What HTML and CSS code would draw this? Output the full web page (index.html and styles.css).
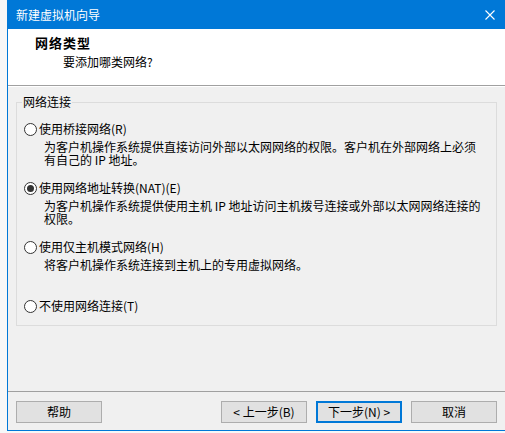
FILE: index.html
```html
<!DOCTYPE html>
<html lang="zh-CN">
<head>
<meta charset="utf-8">
<title>新建虚拟机向导</title>
<link rel="stylesheet" href="styles.css">
</head>
<body>
<div class="window">
  <div class="titlebar">
    <span class="title-text">新建虚拟机向导</span>
    <svg class="close" width="10" height="10" viewBox="0 0 10 10" aria-hidden="true">
      <path d="M0.5 0.5 L9.5 9.5 M9.5 0.5 L0.5 9.5" stroke="#fff" stroke-width="1.1" fill="none"/>
    </svg>
  </div>
  <div class="header">
    <div class="h-title">网络类型</div>
    <div class="h-sub">要添加哪类网络?</div>
  </div>
  <div class="body">
    <div class="group">
      <span class="legend">网络连接</span>
      <div class="option">
        <div class="radio-row"><span class="radio"></span><span>使用桥接网络(R)</span></div>
        <div class="desc">为客户机操作系统提供直接访问外部以太网网络的权限。客户机在外部网络上必须<br>有自己的 IP 地址。</div>
      </div>
      <div class="option">
        <div class="radio-row"><span class="radio checked"></span><span>使用网络地址转换(NAT)(E)</span></div>
        <div class="desc">为客户机操作系统提供使用主机 IP 地址访问主机拨号连接或外部以太网网络连接的<br>权限。</div>
      </div>
      <div class="option">
        <div class="radio-row"><span class="radio"></span><span>使用仅主机模式网络(H)</span></div>
        <div class="desc">将客户机操作系统连接到主机上的专用虚拟网络。</div>
      </div>
      <div class="option">
        <div class="radio-row"><span class="radio"></span><span>不使用网络连接(T)</span></div>
      </div>
    </div>
  </div>
  <div class="footer">
    <button class="btn help">帮助</button>
    <button class="btn">&lt; 上一步(B)</button>
    <button class="btn default">下一步(N) &gt;</button>
    <button class="btn">取消</button>
  </div>
</div>
</body>
</html>
```

FILE: styles.css
```css
html, body {
  margin: 0;
  padding: 0;
}

body {
  width: 505px;
  height: 433px;
  overflow: hidden;
  background: #f7f7f7;
  font-family: "Noto Sans CJK SC", "Noto Sans", sans-serif;
  font-size: 12px;
  color: #000;
}

.window {
  margin-left: 7px;
  width: 498px;
  height: 431px;
  box-sizing: border-box;
  border-left: 1px solid #0078d7;
  border-bottom: 1px solid #0078d7;
  background: #f0f0f0;
  display: flex;
  flex-direction: column;
}

.titlebar {
  height: 29px;
  flex: none;
  background: #0078d7;
  color: #fff;
  display: flex;
  align-items: center;
  justify-content: space-between;
  padding: 0 10px 0 8px;
}

.title-text {
  line-height: 16px;
}

.close {
  display: block;
}

.header {
  height: 57px;
  flex: none;
  box-sizing: border-box;
  background: #fff;
  border-bottom: 1px solid #a0a0a0;
  padding: 6px 0 0 27px;
}

.h-title {
  font-weight: 700;
  font-size: 13px;
  letter-spacing: 1px;
  line-height: 16px;
}

.h-sub {
  margin: 3px 0 0 28px;
  line-height: 16px;
}

.body {
  height: 305px;
  flex: none;
  box-sizing: border-box;
  border-top: 1px solid #fff;
  padding: 15px 8px 0;
}

.group {
  position: relative;
  height: 224px;
  box-sizing: border-box;
  border: 1px solid #dcdcdc;
  padding: 19px 0 0 7px;
}

.legend {
  position: absolute;
  top: -8px;
  left: 5px;
  padding: 0 1px;
  background: #f0f0f0;
  line-height: 14px;
}

.option {
  height: 59px;
}

.radio-row {
  display: flex;
  align-items: center;
  gap: 2px;
  height: 14px;
  line-height: 14px;
}

.radio {
  position: relative;
  flex: none;
  width: 13px;
  height: 13px;
  box-sizing: border-box;
  border: 1px solid #333;
  border-radius: 50%;
  background: #fff;
}

.radio.checked::after {
  content: "";
  position: absolute;
  left: 2px;
  top: 2px;
  width: 7px;
  height: 7px;
  border-radius: 50%;
  background: #333;
}

.desc {
  margin: 4px 0 0 20px;
  line-height: 13px;
  white-space: nowrap;
}

.footer {
  flex: 1;
  border-top: 1px solid #a0a0a0;
  display: flex;
  align-items: flex-start;
  gap: 9px;
  padding: 9px 8px 0;
}

.btn {
  width: 86px;
  height: 22px;
  box-sizing: border-box;
  border: 1px solid #adadad;
  background: #e1e1e1;
  padding: 0;
  margin: 0;
  font-family: inherit;
  font-size: 12px;
  line-height: 14px;
  color: #000;
  display: flex;
  align-items: center;
  justify-content: center;
}

.btn.help {
  margin-right: auto;
}

.btn.default {
  border: 2px solid #0078d7;
}
```
